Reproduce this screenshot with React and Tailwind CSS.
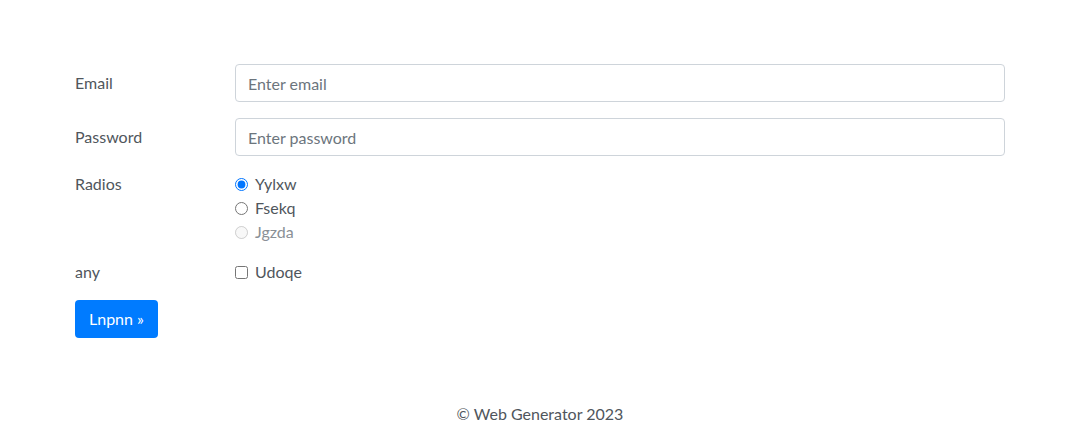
import React from 'react';

const font = { fontFamily: 'Lato, "Noto Sans", sans-serif' };

export default function App() {
  return (
    <div className="min-h-[426px] bg-white text-[16px] leading-6 text-[#50565c]" style={font}>
      <div className="mx-auto w-[960px] px-[15px] pt-[64px]">
        <form onSubmit={(e) => e.preventDefault()}>
          {/* Email */}
          <div className="mb-4 flex">
            <label className="w-[160px] shrink-0 pt-[7px] pb-[7px]">Email</label>
            <div className="flex-1">
              <input
                type="email"
                placeholder="Enter email"
                className="block h-[38px] w-full rounded border border-[#ced4da] px-3 text-[#495057] placeholder:text-[#6c757d] outline-none"
              />
            </div>
          </div>

          {/* Password */}
          <div className="mb-4 flex">
            <label className="w-[160px] shrink-0 pt-[7px] pb-[7px]">Password</label>
            <div className="flex-1">
              <input
                type="password"
                placeholder="Enter password"
                className="block h-[38px] w-full rounded border border-[#ced4da] px-3 text-[#495057] placeholder:text-[#6c757d] outline-none"
              />
            </div>
          </div>

          {/* Radios */}
          <div className="mb-4 flex">
            <div className="w-[160px] shrink-0">Radios</div>
            <div className="flex flex-col">
              <label className="flex items-center gap-[7px]">
                <input type="radio" name="r" defaultChecked className="m-0 h-[13px] w-[13px] accent-[#0075ff]" />
                Yylxw
              </label>
              <label className="flex items-center gap-[7px]">
                <input type="radio" name="r" className="m-0 h-[13px] w-[13px]" />
                Fsekq
              </label>
              <label className="flex items-center gap-[7px] text-[#8a9096]">
                <input type="radio" name="r" disabled className="m-0 h-[13px] w-[13px]" />
                Jgzda
              </label>
            </div>
          </div>

          {/* any */}
          <div className="mb-4 flex">
            <div className="w-[160px] shrink-0">any</div>
            <label className="flex items-center gap-[7px]">
              <input type="checkbox" className="m-0 h-[13px] w-[13px]" />
              Udoqe
            </label>
          </div>

          <button
            type="submit"
            className="h-[38px] rounded bg-[#007bff] px-[14px] text-white"
          >
            Lnpnn &raquo;
          </button>
        </form>
      </div>

      <footer className="mt-[64px] text-center text-[#50565c]">
        &copy; Web Generator 2023
      </footer>
    </div>
  );
}
